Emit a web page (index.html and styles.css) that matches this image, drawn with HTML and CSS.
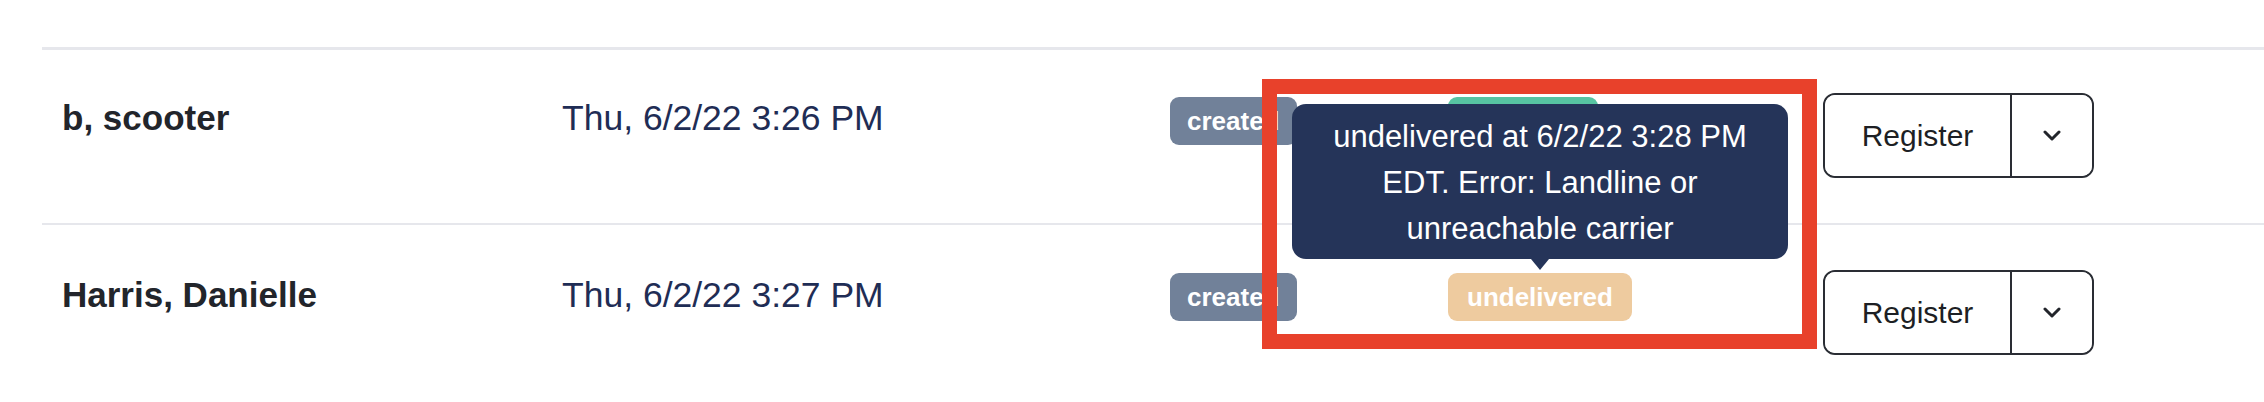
FILE: index.html
```html
<!DOCTYPE html>
<html lang="en">
<head>
    <meta charset="UTF-8">
    <title>Messages</title>
    <link rel="stylesheet" href="styles.css">
</head>
<body>
    <div class="list">
        <div class="row">
            <div class="cell name">b, scooter</div>
            <div class="cell date">Thu, 6/2/22 3:26 PM</div>
            <div class="cell"><span class="badge badge-created">created</span></div>
            <div class="cell"><span class="badge badge-delivered">delivered</span></div>
            <div class="cell">
                <div class="split-btn">
                    <button class="split-main">Register</button>
                    <button class="split-toggle">
                        <svg width="18" height="11" viewBox="0 0 18 11"><polyline points="2,2 9,9 16,2" fill="none" stroke="#22252b" stroke-width="3" stroke-linecap="round" stroke-linejoin="round"/></svg>
                    </button>
                </div>
            </div>
        </div>
        <div class="row">
            <div class="cell name">Harris, Danielle</div>
            <div class="cell date">Thu, 6/2/22 3:27 PM</div>
            <div class="cell"><span class="badge badge-created">created</span></div>
            <div class="cell">
                <span class="badge badge-undelivered">undelivered
                    <span class="tooltip">undelivered at 6/2/22 3:28 PM EDT. Error: Landline or unreachable carrier</span>
                </span>
            </div>
            <div class="cell">
                <div class="split-btn">
                    <button class="split-main">Register</button>
                    <button class="split-toggle">
                        <svg width="18" height="11" viewBox="0 0 18 11"><polyline points="2,2 9,9 16,2" fill="none" stroke="#22252b" stroke-width="3" stroke-linecap="round" stroke-linejoin="round"/></svg>
                    </button>
                </div>
            </div>
        </div>
    </div>

    <!-- annotation box drawn over the screenshot -->
    <div class="highlight"></div>
</body>
</html>
```

FILE: styles.css
```css
body {
    margin: 0;
    font-family: "Liberation Sans", Arial, sans-serif;
    background: #fff;
}

.list {
    margin: 47px 0 0 42px;
    border-top: 3px solid #e6e7ec;
}

.row {
    display: grid;
    grid-template-columns: 500px 608px 278px 375px 1fr;
    align-items: start;
    padding: 43px 0 45px;
    border-bottom: 2px solid #e6e7ec;
}

.row:last-child {
    border-bottom: 0;
    padding-top: 45px;
}

.cell {
    padding-left: 20px;
}

.name {
    font-size: 35px;
    font-weight: bold;
    color: #22252b;
    line-height: 50px;
}

.date {
    font-size: 35.5px;
    color: #1f2d55;
    line-height: 50px;
}

.badge {
    position: relative;
    display: inline-block;
    margin-top: 4px;
    padding: 0 18px;
    height: 48px;
    line-height: 48px;
    border-radius: 9px;
    font-size: 26px;
    font-weight: bold;
    color: #fff;
}

.row:last-child .badge {
    margin-top: 3px;
}

.badge-created {
    background: #718199;
    padding: 0 17px;
}

.badge-delivered {
    background: #57c4a2;
}

.badge-undelivered {
    background: #eecb9f;
    padding: 0 19px;
}

.tooltip {
    position: absolute;
    left: 50%;
    bottom: calc(100% + 14px);
    transform: translateX(-50%);
    width: 496px;
    box-sizing: border-box;
    padding: 10px 18px 7px;
    background: #253459;
    color: #fff;
    border-radius: 14px;
    font-size: 31px;
    font-weight: normal;
    line-height: 46px;
    text-align: center;
    z-index: 2;
}

.tooltip::after {
    content: "";
    position: absolute;
    top: 100%;
    left: 50%;
    margin-left: -9px;
    border-left: 9px solid transparent;
    border-right: 9px solid transparent;
    border-top: 11px solid #253459;
}

.split-btn {
    display: inline-flex;
    height: 85px;
    box-sizing: border-box;
    border: 2px solid #2a2d34;
    border-radius: 12px;
    overflow: hidden;
}

.split-btn button {
    border: 0;
    background: #fff;
    font-family: inherit;
    color: #1d1f24;
    cursor: pointer;
}

.split-main {
    width: 187px;
    font-size: 30px;
    border-right: 2px solid #2a2d34 !important;
}

.split-toggle {
    width: 80px;
    display: flex;
    align-items: center;
    justify-content: center;
}

.highlight {
    position: absolute;
    left: 1262px;
    top: 79px;
    width: 555px;
    height: 270px;
    box-sizing: border-box;
    border: 15px solid #e8412b;
    z-index: 3;
}
```
